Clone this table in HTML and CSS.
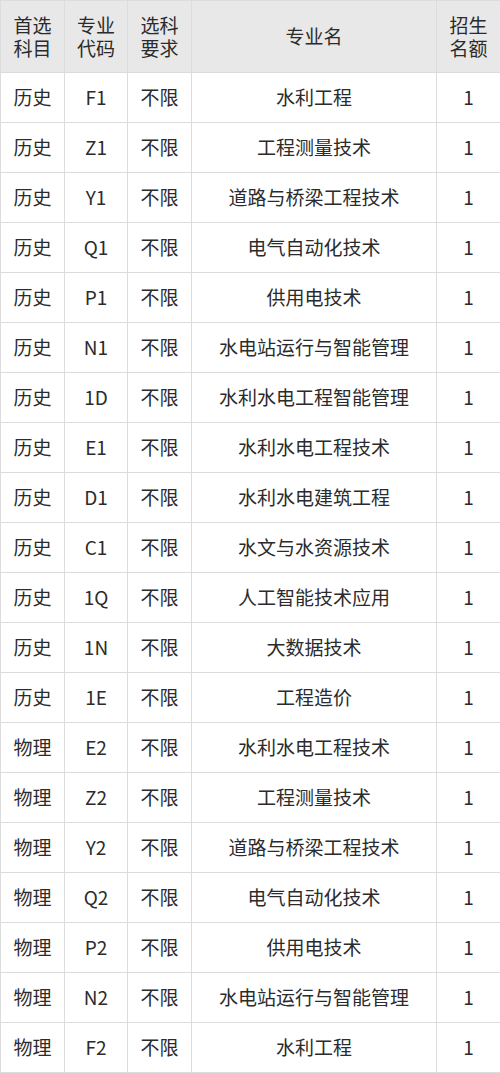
FILE: index.html
```html
<!DOCTYPE html>
<html lang="zh-CN">
<head>
  <meta charset="UTF-8">
  <meta name="viewport" content="width=device-width, initial-scale=1.0">
  <title>招生计划</title>
  <link rel="stylesheet" href="styles.css">
</head>
<body>
  <table class="plan">
    <colgroup>
      <col class="c-subject">
      <col class="c-code">
      <col class="c-req">
      <col class="c-name">
      <col class="c-num">
    </colgroup>
    <thead>
      <tr>
        <th>首选<br>科目</th>
        <th>专业<br>代码</th>
        <th>选科<br>要求</th>
        <th>专业名</th>
        <th>招生<br>名额</th>
      </tr>
    </thead>
    <tbody>
      <tr><td>历史</td><td>F1</td><td>不限</td><td>水利工程</td><td>1</td></tr>
      <tr><td>历史</td><td>Z1</td><td>不限</td><td>工程测量技术</td><td>1</td></tr>
      <tr><td>历史</td><td>Y1</td><td>不限</td><td>道路与桥梁工程技术</td><td>1</td></tr>
      <tr><td>历史</td><td>Q1</td><td>不限</td><td>电气自动化技术</td><td>1</td></tr>
      <tr><td>历史</td><td>P1</td><td>不限</td><td>供用电技术</td><td>1</td></tr>
      <tr><td>历史</td><td>N1</td><td>不限</td><td>水电站运行与智能管理</td><td>1</td></tr>
      <tr><td>历史</td><td>1D</td><td>不限</td><td>水利水电工程智能管理</td><td>1</td></tr>
      <tr><td>历史</td><td>E1</td><td>不限</td><td>水利水电工程技术</td><td>1</td></tr>
      <tr><td>历史</td><td>D1</td><td>不限</td><td>水利水电建筑工程</td><td>1</td></tr>
      <tr><td>历史</td><td>C1</td><td>不限</td><td>水文与水资源技术</td><td>1</td></tr>
      <tr><td>历史</td><td>1Q</td><td>不限</td><td>人工智能技术应用</td><td>1</td></tr>
      <tr><td>历史</td><td>1N</td><td>不限</td><td>大数据技术</td><td>1</td></tr>
      <tr><td>历史</td><td>1E</td><td>不限</td><td>工程造价</td><td>1</td></tr>
      <tr><td>物理</td><td>E2</td><td>不限</td><td>水利水电工程技术</td><td>1</td></tr>
      <tr><td>物理</td><td>Z2</td><td>不限</td><td>工程测量技术</td><td>1</td></tr>
      <tr><td>物理</td><td>Y2</td><td>不限</td><td>道路与桥梁工程技术</td><td>1</td></tr>
      <tr><td>物理</td><td>Q2</td><td>不限</td><td>电气自动化技术</td><td>1</td></tr>
      <tr><td>物理</td><td>P2</td><td>不限</td><td>供用电技术</td><td>1</td></tr>
      <tr><td>物理</td><td>N2</td><td>不限</td><td>水电站运行与智能管理</td><td>1</td></tr>
      <tr><td>物理</td><td>F2</td><td>不限</td><td>水利工程</td><td>1</td></tr>
    </tbody>
  </table>
</body>
</html>
```

FILE: styles.css
```css
body {
  margin: 0;
  background-color: #fff;
  font-family: "Noto Sans CJK SC", "Noto Sans", sans-serif;
  color: #2b2b2b;
}
.plan {
  width: 500px;
  border-collapse: collapse;
  table-layout: fixed;
  font-size: 19px;
}
.c-subject { width: 64px; }
.c-code { width: 63px; }
.c-req { width: 64px; }
.c-name { width: 245px; }
.c-num { width: 64px; }
.plan th,
.plan td {
  border: 1px solid #dcdcdc;
  text-align: center;
  padding: 0 0 2px;
}
.plan th {
  height: 69px;
  background-color: #e8e8e8;
  font-weight: normal;
  line-height: 23px;
}
.plan td {
  height: 47px;
  line-height: 25px;
}
```
